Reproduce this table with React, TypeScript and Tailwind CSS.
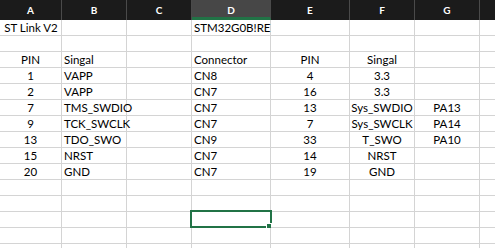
const cols = [
  { key: 'A', w: 'w-[62px]' },
  { key: 'B', w: 'w-[65px]' },
  { key: 'C', w: 'w-[65px]' },
  { key: 'D', w: 'w-[79px]' },
  { key: 'E', w: 'w-[79px]' },
  { key: 'F', w: 'w-[65px]' },
  { key: 'G', w: 'w-[65px]' },
  { key: '', w: 'w-[40px]' },
];

// alignment per column: centered for A/E/F/G, left for the rest
const align = ['justify-center', 'justify-start', 'justify-start', 'justify-start', 'justify-center', 'justify-center', 'justify-center', 'justify-start'];

type Row = string[];

const rows: Row[] = [
  ['ST Link V2', '', '', 'STM32G0B!RE', '', '', '', ''],
  ['', '', '', '', '', '', '', ''],
  ['PIN', 'Singal', '', 'Connector', 'PIN', 'Singal', '', ''],
  ['1', 'VAPP', '', 'CN8', '4', '3.3', '', ''],
  ['2', 'VAPP', '', 'CN7', '16', '3.3', '', ''],
  ['7', 'TMS_SWDIO', '', 'CN7', '13', 'Sys_SWDIO', 'PA13', ''],
  ['9', 'TCK_SWCLK', '', 'CN7', '7', 'Sys_SWCLK', 'PA14', ''],
  ['13', 'TDO_SWO', '', 'CN9', '33', 'T_SWO', 'PA10', ''],
  ['15', 'NRST', '', 'CN7', '14', 'NRST', '', ''],
  ['20', 'GND', '', 'CN7', '19', 'GND', '', ''],
  ['', '', '', '', '', '', '', ''],
  ['', '', '', '', '', '', '', ''],
  ['', '', '', '', '', '', '', ''],
  ['', '', '', '', '', '', '', ''],
  ['', '', '', '', '', '', '', ''],
];

const SELECTED = { row: 12, col: 3 };

export default function App() {
  return (
    <div className="h-[248px] w-[495px] overflow-hidden bg-white font-['Lato','Liberation_Sans',sans-serif] text-[11.5px] text-black">
      <div className="flex h-[20px]">
        {cols.map((c, i) => (
          <div
            key={i}
            className={`${c.w} flex shrink-0 items-center justify-center border-r border-[#4a4a4a] text-[10px] font-bold text-white ${
              c.key === 'D' ? 'border-b-[3px] border-b-[#217346] bg-[#474747] pt-[3px]' : 'bg-[#1b1b1b]'
            }`}
          >
            {c.key}
          </div>
        ))}
      </div>
      {rows.map((r, ri) => (
        <div key={ri} className="flex h-[16px]">
          {r.map((v, ci) => (
            <div
              key={ci}
              className={`${cols[ci].w} relative flex shrink-0 items-center whitespace-nowrap border-r border-b border-[#d4d4d4] px-[2px] pt-[1px] leading-none ${align[ci]}`}
            >
              {v && <span className={ri === 0 && ci === 0 ? 'pl-[1px]' : ''}>{v}</span>}
              {ri === SELECTED.row && ci === SELECTED.col && (
                <>
                  <div className="absolute left-[-2px] top-[-2px] h-[18px] w-[82px] border-2 border-[#217346]" />
                  <div className="absolute right-[-2px] bottom-[-2px] h-[6px] w-[6px] border border-white bg-[#217346]" />
                </>
              )}
            </div>
          ))}
        </div>
      ))}
    </div>
  );
}
